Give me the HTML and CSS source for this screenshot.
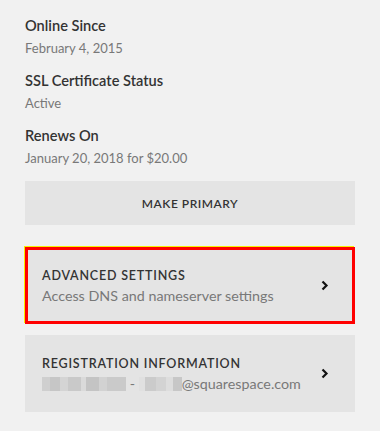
FILE: index.html
```html
<!DOCTYPE html>
<html lang="en">
<head>
    <meta charset="UTF-8">
    <meta name="viewport" content="width=device-width, initial-scale=1.0">
    <title>Domain settings</title>
    <link rel="stylesheet" href="styles.css">
</head>
<body>
    <div class="painel">
        <div class="info">
            <h3>Online Since</h3>
            <p>February 4, 2015</p>
        </div>
        <div class="info">
            <h3>SSL Certificate Status</h3>
            <p>Active</p>
        </div>
        <div class="info">
            <h3>Renews On</h3>
            <p>January 20, 2018 for $20.00</p>
        </div>

        <button type="button" class="botao">MAKE PRIMARY</button>

        <a href="#" class="opcao destaque">
            <div class="opcao-texto">
                <h4>ADVANCED SETTINGS</h4>
                <p>Access DNS and nameserver settings</p>
            </div>
            <svg class="seta" width="8" height="11" viewBox="0 0 8 11"><polyline points="1.5,1.5 5.5,5.5 1.5,9.5" fill="none" stroke="#111" stroke-width="2.2"/></svg>
        </a>

        <a href="#" class="opcao">
            <div class="opcao-texto">
                <h4>REGISTRATION INFORMATION</h4>
                <p><span class="borrado nome"></span> - <span class="borrado email"></span>@squarespace.com</p>
            </div>
            <svg class="seta" width="8" height="11" viewBox="0 0 8 11"><polyline points="1.5,1.5 5.5,5.5 1.5,9.5" fill="none" stroke="#111" stroke-width="2.2"/></svg>
        </a>
    </div>
</body>
</html>
```

FILE: styles.css
```css
* {
    box-sizing: border-box;
    margin: 0;
    padding: 0;
    font-family: 'Lato', 'Liberation Sans', sans-serif;
}

body {
    background-color: #f1f1f1;
    color: #333;
}

.painel {
    padding: 17px 25px 0 25px;
    display: flex;
    flex-direction: column;
}

.info {
    height: 55px;
}

.info h3 {
    font-size: 14.6px;
    font-weight: 600;
    color: #333;
    line-height: 18px;
}

.info p {
    font-size: 13px;
    color: #787878;
    line-height: 18px;
    margin-top: 4px;
}

.botao {
    margin-top: -1px;
    height: 44px;
    width: 330px;
    border: none;
    background-color: #e4e4e4;
    font-size: 12px;
    font-weight: 600;
    letter-spacing: 0.5px;
    color: #333;
    cursor: pointer;
}

.opcao {
    display: flex;
    align-items: center;
    justify-content: space-between;
    width: 330px;
    height: 77px;
    padding: 0 26px 0 17px;
    background-color: #e4e4e4;
    text-decoration: none;
    margin-top: 11px;
}

.destaque {
    margin-top: 22px;
    box-shadow: inset 0 0 0 3px #ff0000, -1px -1px 0 #f6f000;
}

.opcao-texto h4 {
    font-size: 12.5px;
    font-weight: 600;
    letter-spacing: 0.8px;
    color: #333;
    line-height: 18px;
}

.opcao-texto p {
    font-size: 14.3px;
    color: #787878;
    line-height: 18px;
    margin-top: 2px;
}

.borrado {
    display: inline-block;
    height: 14px;
    vertical-align: -2px;
    background:
        linear-gradient(90deg, #cfcfcf 0 9%, #c6c6c6 9% 22%, #d4d4d4 22% 31%, #c9c9c9 31% 46%, #dadada 46% 52%, #c4c4c4 52% 68%, #d2d2d2 68% 77%, #cacaca 77% 100%);
}

.nome {
    width: 84px;
}

.email {
    width: 43px;
    background:
        linear-gradient(90deg, #e0e0e0 0 14%, #cbcbcb 14% 40%, #d3d3d3 40% 62%, #dddddd 62% 78%, #c7c7c7 78% 100%);
}

.seta {
    flex-shrink: 0;
}
```
